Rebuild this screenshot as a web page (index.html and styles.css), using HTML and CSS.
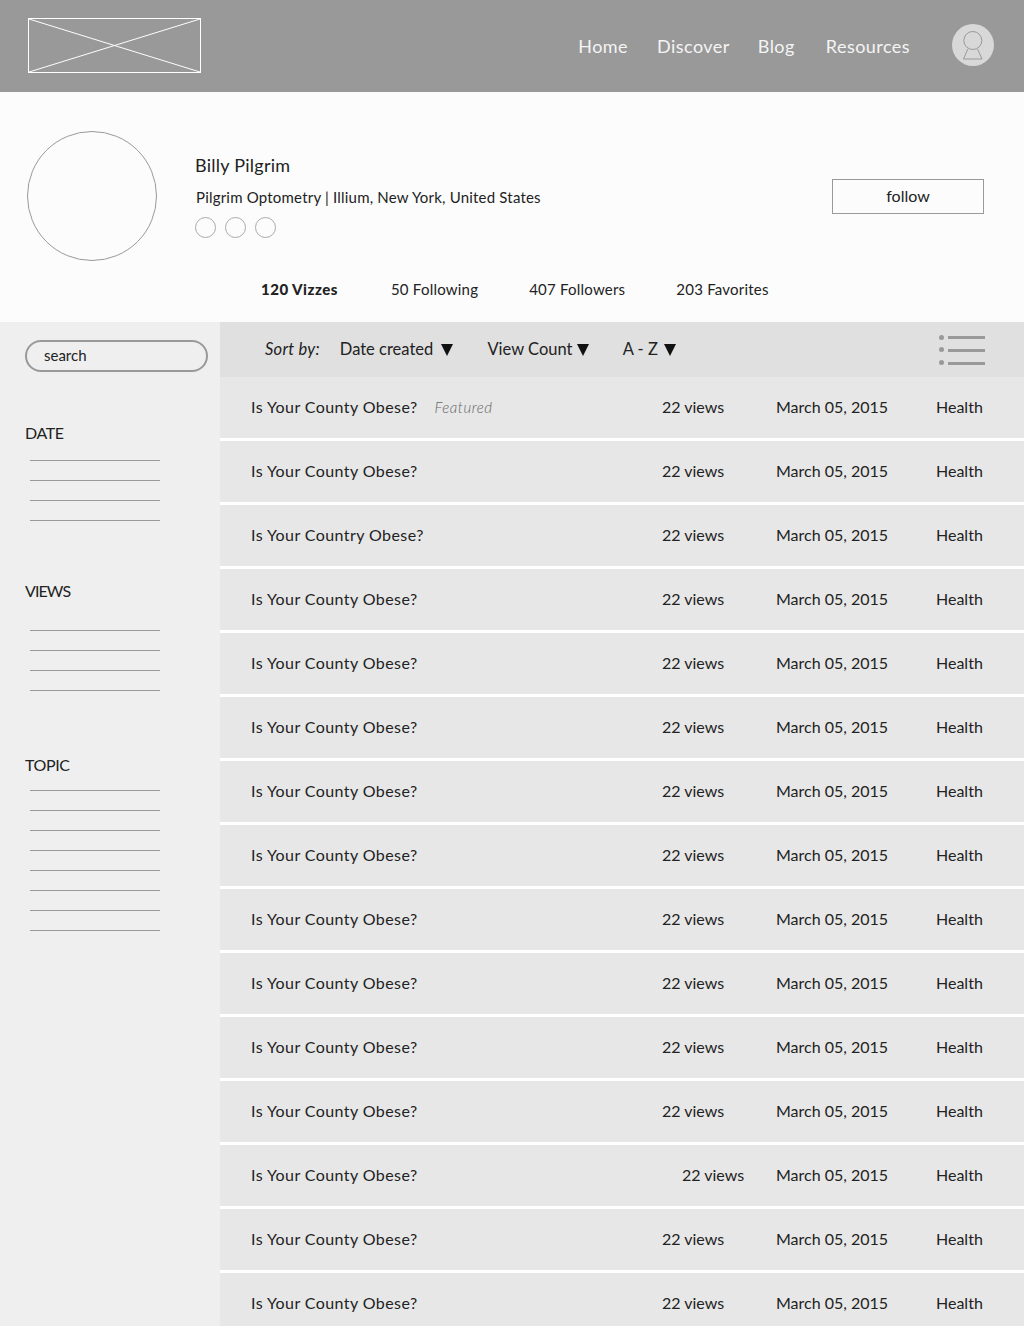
FILE: index.html
```html
<!DOCTYPE html>
<html lang="en">
<head>
  <meta charset="UTF-8" />
  <title>Profile</title>
  <link rel="stylesheet" href="styles.css">
</head>
<body>

  <!-- Header -->
  <header class="topbar">
    <svg class="logo" width="173" height="55" viewBox="0 0 173 55">
      <rect x="0.5" y="0.5" width="172" height="54" fill="none" stroke="#fff"/>
      <path d="M1 1 L172 54 M172 1 L1 54" stroke="#fff" fill="none"/>
    </svg>
    <nav class="nav">
      <a href="#home">Home</a>
      <a href="#discover">Discover</a>
      <a href="#blog">Blog</a>
      <a href="#resources">Resources</a>
    </nav>
    <svg class="user" width="42" height="42" viewBox="0 0 42 42">
      <circle cx="21" cy="21" r="21" fill="#d8d8d8"/>
      <circle cx="20.8" cy="16.5" r="9" fill="none" stroke="#999"/>
      <path d="M15.8 25 L11.5 35 H30 L25.5 25" fill="none" stroke="#999"/>
    </svg>
  </header>

  <!-- Profile -->
  <section class="profile">
    <div class="profile-top">
      <div class="avatar"></div>
      <div class="info">
        <div class="name">Billy Pilgrim</div>
        <div class="org">Pilgrim Optometry | Illium, New York, United States</div>
        <div class="socials">
          <span class="social"></span>
          <span class="social"></span>
          <span class="social"></span>
        </div>
      </div>
      <button class="follow" type="button">follow</button>
    </div>
    <div class="stats">
      <a class="stat active" href="#vizzes">120 Vizzes</a>
      <a class="stat following" href="#following">50 Following</a>
      <a class="stat followers" href="#followers">407 Followers</a>
      <a class="stat" href="#favorites">203 Favorites</a>
    </div>
  </section>

  <div class="content">
    <!-- Filters -->
    <aside class="sidebar">
      <div class="search">search</div>

      <h3 class="filter-title date-title">DATE</h3>
      <ul class="filter-list date-list">
        <li></li><li></li><li></li><li></li>
      </ul>

      <h3 class="filter-title views-title">VIEWS</h3>
      <ul class="filter-list views-list">
        <li></li><li></li><li></li><li></li>
      </ul>

      <h3 class="filter-title topic-title">TOPIC</h3>
      <ul class="filter-list topic-list">
        <li></li><li></li><li></li><li></li><li></li><li></li><li></li><li></li>
      </ul>
    </aside>

    <main class="main">
      <div class="sortbar">
        <span class="sort-label">Sort by:</span>
        <span class="sort sort-date">Date created <i class="arrow"></i></span>
        <span class="sort sort-views">View Count <i class="arrow"></i></span>
        <span class="sort sort-az">A - Z <i class="arrow"></i></span>
        <svg class="list-icon" width="46" height="30" viewBox="0 0 46 30">
          <circle cx="2.5" cy="2.5" r="2.5" fill="#999"/>
          <circle cx="2.5" cy="14.5" r="2.5" fill="#999"/>
          <circle cx="2.5" cy="27.5" r="2.5" fill="#999"/>
          <path d="M9 2.5 H46 M9 15.5 H46 M9 28.5 H46" stroke="#999" stroke-width="3"/>
        </svg>
      </div>

      <div class="row">
        <span class="title">Is Your County Obese?<em class="featured">Featured</em></span>
        <span class="views">22 views</span><span class="date">March 05, 2015</span><span class="topic">Health</span>
      </div>
      <div class="row">
        <span class="title">Is Your County Obese?</span>
        <span class="views">22 views</span><span class="date">March 05, 2015</span><span class="topic">Health</span>
      </div>
      <div class="row">
        <span class="title">Is Your Country Obese?</span>
        <span class="views">22 views</span><span class="date">March 05, 2015</span><span class="topic">Health</span>
      </div>
      <div class="row">
        <span class="title">Is Your County Obese?</span>
        <span class="views">22 views</span><span class="date">March 05, 2015</span><span class="topic">Health</span>
      </div>
      <div class="row">
        <span class="title">Is Your County Obese?</span>
        <span class="views">22 views</span><span class="date">March 05, 2015</span><span class="topic">Health</span>
      </div>
      <div class="row">
        <span class="title">Is Your County Obese?</span>
        <span class="views">22 views</span><span class="date">March 05, 2015</span><span class="topic">Health</span>
      </div>
      <div class="row">
        <span class="title">Is Your County Obese?</span>
        <span class="views">22 views</span><span class="date">March 05, 2015</span><span class="topic">Health</span>
      </div>
      <div class="row">
        <span class="title">Is Your County Obese?</span>
        <span class="views">22 views</span><span class="date">March 05, 2015</span><span class="topic">Health</span>
      </div>
      <div class="row">
        <span class="title">Is Your County Obese?</span>
        <span class="views">22 views</span><span class="date">March 05, 2015</span><span class="topic">Health</span>
      </div>
      <div class="row">
        <span class="title">Is Your County Obese?</span>
        <span class="views">22 views</span><span class="date">March 05, 2015</span><span class="topic">Health</span>
      </div>
      <div class="row">
        <span class="title">Is Your County Obese?</span>
        <span class="views">22 views</span><span class="date">March 05, 2015</span><span class="topic">Health</span>
      </div>
      <div class="row">
        <span class="title">Is Your County Obese?</span>
        <span class="views">22 views</span><span class="date">March 05, 2015</span><span class="topic">Health</span>
      </div>
      <div class="row">
        <span class="title">Is Your County Obese?</span>
        <span class="views shifted">22 views</span><span class="date">March 05, 2015</span><span class="topic">Health</span>
      </div>
      <div class="row">
        <span class="title">Is Your County Obese?</span>
        <span class="views">22 views</span><span class="date">March 05, 2015</span><span class="topic">Health</span>
      </div>
      <div class="row">
        <span class="title">Is Your County Obese?</span>
        <span class="views">22 views</span><span class="date">March 05, 2015</span><span class="topic">Health</span>
      </div>
    </main>
  </div>

</body>
</html>
```

FILE: styles.css
```css
html, body {
  height: 1326px;
  overflow: hidden;
}
body {
  margin: 0;
  font-family: Lato, "Open Sans", sans-serif;
  font-size: 16px;
  color: #222;
  background-color: #fff;
}
a {
  color: inherit;
  text-decoration: none;
}
.topbar {
  display: flex;
  align-items: center;
  height: 92px;
  padding-left: 28px;
  box-sizing: border-box;
  background-color: #999;
}
.logo {
  display: block;
  margin-bottom: 1px;
}
.nav {
  display: flex;
  margin-left: auto;
  color: #f4f4f4;
  font-size: 18px;
  letter-spacing: 0.45px;
  margin-bottom: 1px;
}
.nav a:nth-child(1) { margin-right: 29px; }
.nav a:nth-child(2) { margin-right: 28px; }
.nav a:nth-child(3) { margin-right: 31px; }
.user {
  display: block;
  margin-left: 42px;
  margin-right: 30px;
  margin-bottom: 2px;
}
.profile {
  height: 230px;
  box-sizing: border-box;
  padding-top: 39px;
  background-color: #fcfcfc;
}
.profile-top {
  display: flex;
  align-items: center;
  padding-left: 27px;
  padding-right: 40px;
}
.avatar {
  width: 130px;
  height: 130px;
  box-sizing: border-box;
  border: 1px solid #999;
  border-radius: 50%;
}
.info {
  margin-left: 38px;
}
.name {
  font-size: 18px;
  line-height: 22px;
  letter-spacing: 0.25px;
}
.org {
  margin-top: 11px;
  margin-left: 1px;
  font-size: 15px;
  line-height: 20px;
  letter-spacing: 0.2px;
}
.socials {
  display: flex;
  gap: 9px;
  margin-top: 10px;
}
.social {
  width: 21px;
  height: 21px;
  box-sizing: border-box;
  border: 1px solid #aaa;
  border-radius: 50%;
}
.follow {
  width: 152px;
  height: 35px;
  margin-left: auto;
  padding-bottom: 3px;
  background: none;
  border: 1px solid #999;
  font-family: inherit;
  font-size: 16px;
  color: #222;
}
.stats {
  display: flex;
  padding-left: 261px;
  margin-top: 18px;
  font-size: 15px;
  line-height: 20px;
  letter-spacing: 0.22px;
}
.stat {
  margin-right: 50px;
}
.stat.active {
  font-weight: 900;
  letter-spacing: 0.5px;
  margin-right: 53px;
}
.stat.following { margin-right: 51px; }
.stat.followers { margin-right: 51px; }
.content {
  display: flex;
  height: 1004px;
}
.sidebar {
  width: 220px;
  flex-shrink: 0;
  box-sizing: border-box;
  padding: 18px 12px 0 25px;
  background-color: #efefef;
}
.search {
  height: 32px;
  box-sizing: border-box;
  padding-left: 17px;
  border: 2px solid #999;
  border-radius: 16px;
  font-size: 15px;
  line-height: 26px;
}
.filter-title {
  margin: 0;
  font-size: 16px;
  font-weight: 400;
  line-height: 20px;
  letter-spacing: -0.4px;
}
.date-title { margin-top: 51px; }
.views-title { margin-top: 41px; letter-spacing: -0.9px; }
.topic-title { margin-top: 45px; }
.filter-list {
  list-style: none;
  margin: 0 0 0 5px;
  padding: 0;
  width: 130px;
}
.filter-list li {
  height: 19px;
  border-top: 1px solid #999;
}
.date-list { margin-top: 17px; }
.views-list { margin-top: 29px; }
.topic-list { margin-top: 15px; }
.main {
  flex: 1;
}
.sortbar {
  display: flex;
  align-items: center;
  height: 55px;
  padding-left: 45px;
  background-color: #e0e0e0;
  font-size: 16.5px;
}
.sort-label {
  font-style: italic;
  letter-spacing: 0.25px;
  margin-right: 20px;
  margin-bottom: 2px;
}
.sort {
  margin-bottom: 2px;
}
.sort-date { margin-right: 34px; }
.sort-views { margin-right: 34px; }
.sort-date .arrow { margin-left: 4px; }
.sort-views .arrow { margin-left: 0; }
.sort-az .arrow { margin-left: 2px; }
.arrow {
  display: inline-block;
  width: 0;
  height: 0;
  border-left: 6px solid transparent;
  border-right: 6px solid transparent;
  border-top: 12px solid #111;
  vertical-align: -1px;
}
.list-icon {
  display: block;
  margin-left: auto;
  margin-right: 39px;
}
.row {
  display: flex;
  align-items: center;
  height: 61px;
  box-sizing: border-box;
  margin-bottom: 3px;
  padding-left: 31px;
  padding-bottom: 2px;
  background-color: #e7e7e7;
  white-space: nowrap;
}
.title {
  width: 411px;
  flex-shrink: 0;
  letter-spacing: 0.42px;
}
.featured {
  margin-left: 17px;
  font-size: 15px;
  color: #666;
  font-weight: 300;
  letter-spacing: 0.5px;
}
.views {
  width: 114px;
  flex-shrink: 0;
}
.views.shifted {
  padding-left: 20px;
  box-sizing: border-box;
}
.date {
  width: 160px;
  flex-shrink: 0;
}
```
